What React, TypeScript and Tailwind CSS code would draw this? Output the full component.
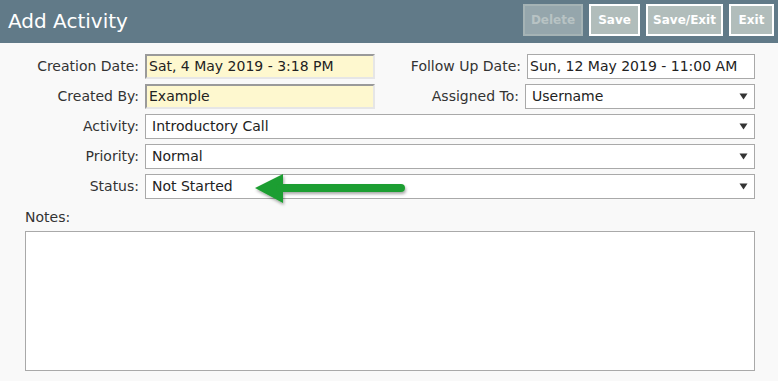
import React from "react";

const font = { fontFamily: '"DejaVu Sans", Verdana, sans-serif' };

function Caret() {
  return (
    <svg width="9" height="7" viewBox="0 0 9 7" className="shrink-0">
      <path d="M0.5 0.5 H8.5 L4.5 6.5 Z" fill="#333" />
    </svg>
  );
}

function Select({ value, className = "" }: { value: string; className?: string }) {
  return (
    <div
      className={`h-[25px] border border-[#a9a9a9] bg-white flex items-center justify-between pl-[6px] pr-[6px] text-[14px] text-[#222] ${className}`}
    >
      <span>{value}</span>
      <Caret />
    </div>
  );
}

function ReadOnly({ value }: { value: string }) {
  return (
    <div className="h-[25px] w-[230px] border-2 border-t-[#9a9a9a] border-l-[#9a9a9a] border-b-[#e6e6e6] border-r-[#e6e6e6] bg-[#fef8cf] flex items-center pl-[2px] text-[14px] text-[#222] whitespace-nowrap overflow-hidden">
      {value}
    </div>
  );
}

function Label({ text, w }: { text: string; w: string }) {
  return <div className={`${w} text-right pr-[6px] text-[14px] text-[#333] shrink-0 whitespace-nowrap`}>{text}</div>;
}

function Btn({ text, w, disabled }: { text: string; w: string; disabled?: boolean }) {
  return (
    <div
      className={`${w} h-[32px] flex items-center justify-center text-[12px] font-bold border-2 ${
        disabled ? "border-[#a5b3b5] bg-[#95a6ac] text-[#b8c3c4]" : "border-white bg-[#b1bdbb] text-white"
      }`}
    >
      {text}
    </div>
  );
}

export default function App() {
  return (
    <div className="w-[778px] h-[381px] bg-[#f9f9f9] overflow-hidden" style={font}>
      <div className="h-[43px] bg-[#617a88] flex items-center justify-between pl-[8px] pr-[4px]">
        <div className="text-white text-[20px] leading-none pb-[2px]">Add Activity</div>
        <div className="flex gap-[6px] pb-[3px]">
          <Btn text="Delete" w="w-[60px]" disabled />
          <Btn text="Save" w="w-[51px]" />
          <Btn text="Save/Exit" w="w-[77px]" />
          <Btn text="Exit" w="w-[45px]" />
        </div>
      </div>

      <div className="relative pt-[11px] pl-[0px]">
        <div className="flex flex-col gap-[5px]">
          <div className="flex items-center">
            <Label text="Creation Date:" w="w-[145px]" />
            <ReadOnly value="Sat, 4 May 2019 - 3:18 PM" />
            <Label text="Follow Up Date:" w="w-[152px]" />
            <div className="h-[25px] w-[228px] border border-[#a9a9a9] bg-white flex items-center pl-[2px] text-[14px] text-[#222] whitespace-nowrap">
              Sun, 12 May 2019 - 11:00 AM
            </div>
          </div>
          <div className="flex items-center">
            <Label text="Created By:" w="w-[145px]" />
            <ReadOnly value="Example" />
            <Label text="Assigned To:" w="w-[150px]" />
            <Select value="Username" className="w-[230px]" />
          </div>
          <div className="flex items-center">
            <Label text="Activity:" w="w-[145px]" />
            <Select value="Introductory Call" className="w-[610px]" />
          </div>
          <div className="flex items-center">
            <Label text="Priority:" w="w-[145px]" />
            <Select value="Normal" className="w-[610px]" />
          </div>
          <div className="flex items-center">
            <Label text="Status:" w="w-[145px]" />
            <Select value="Not Started" className="w-[610px]" />
          </div>
        </div>

        <div className="pl-[25px] pt-[8px] text-[14px] text-[#333]">Notes:</div>
        <div className="ml-[25px] mt-[3px] w-[730px] h-[140px] border border-[#a9a9a9] bg-white" />

        <svg
          className="absolute left-[250px] top-[126px]"
          width="165"
          height="40"
          viewBox="0 0 165 40"
        >
          <defs>
            <filter id="sh" x="-10%" y="-30%" width="130%" height="170%">
              <feDropShadow dx="1" dy="2" stdDeviation="1.5" floodColor="#000" floodOpacity="0.35" />
            </filter>
          </defs>
          <g filter="url(#sh)">
            <path d="M5 19 L33 5 L33 34 Z" fill="#1f9e30" />
            <line x1="30" y1="19" x2="151" y2="19" stroke="#1f9e30" strokeWidth="8" strokeLinecap="round" />
          </g>
        </svg>
      </div>
    </div>
  );
}
